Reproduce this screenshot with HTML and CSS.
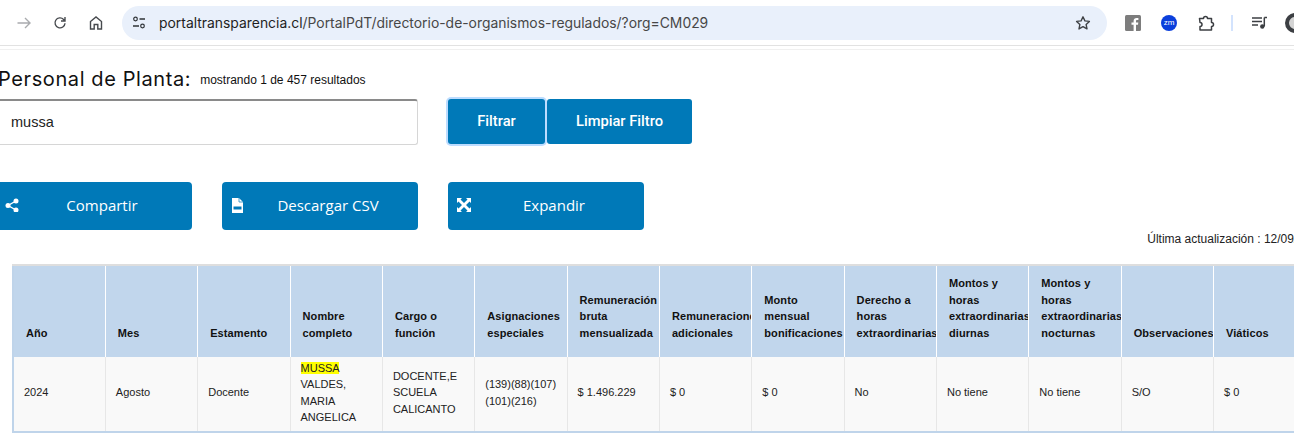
FILE: index.html
```html
<!DOCTYPE html>
<html lang="es">
<head>
<meta charset="utf-8">
<title>Personal de Planta</title>
<link rel="stylesheet" href="styles.css">
</head>
<body>
<header class="toolbar">
  <div class="nav">
    <svg class="ic" width="16" height="16" viewBox="0 0 16 16"><path d="M1.5 8H14M9 3l5 5-5 5" fill="none" stroke="#a9abae" stroke-width="1.4"/></svg>
    <svg class="ic" width="16" height="16" viewBox="0 0 16 16"><path d="M13 8.2A5 5 0 1 1 11.6 4.4L13 5.8M13 2v4H9" fill="none" stroke="#474a4e" stroke-width="1.4"/></svg>
    <svg class="ic" width="16" height="16" viewBox="0 0 16 16"><path d="M2.500 14V6.500L8 2l5.500 4.500V14H9.800V9.500H6.200V14Z" fill="none" stroke="#474a4e" stroke-width="1.4"/></svg>
  </div>
  <div class="omnibox">
    <svg class="tune" width="16" height="16" viewBox="0 0 16 16"><circle cx="4.500" cy="4" r="1.800" fill="none" stroke="#2f3337" stroke-width="1.200"/><path d="M8.500 4H14M2 11h6" stroke="#2f3337" stroke-width="1.300"/><circle cx="11.500" cy="11" r="1.800" fill="none" stroke="#2f3337" stroke-width="1.200"/></svg>
    <span class="url">portaltransparencia.cl<span class="path">/PortalPdT/directorio-de-organismos-regulados/?org=CM029</span></span>
    <svg class="star" width="16" height="16" viewBox="0 0 16 16"><path d="M8 1.800l1.900 4.100 4.500.5-3.300 3 .9 4.500L8 11.600l-4 2.300.9-4.500-3.300-3 4.500-.5Z" fill="none" stroke="#3f4246" stroke-width="1.400" stroke-linejoin="round"/></svg>
  </div>
  <div class="exts">
    <svg width="16" height="16" viewBox="0 0 16 16"><rect width="16" height="16" rx="1.500" fill="#7d7d7d"/><path d="M11 16V9.800h2l.3-2.300H11V6.100c0-.7.300-1.100 1.100-1.100h1.300V3a9 9 0 0 0-1.800-.1C9.800 2.900 8.600 4 8.600 5.900v1.600H6.500v2.300h2.100V16Z" fill="#fff"/></svg>
    <span class="zm">zm</span>
    <svg width="18" height="18" viewBox="0 0 18 18"><path d="M2.500 4.500H6.500a2 2 0 0 1 4 0h4v4a2 2 0 0 1 0 4v3.500H3V12.500a2 2 0 0 0 0-4Z" fill="none" stroke="#3c3f43" stroke-width="1.500" stroke-linejoin="round"/></svg>
    <span class="sep"></span>
    <svg width="16" height="16" viewBox="0 0 16 16"><path d="M0 3h10M0 6.500h10M0 10h6" stroke="#3c3f43" stroke-width="1.400"/><path d="M12.300 2.500v9" stroke="#3c3f43" stroke-width="1.500"/><path d="M12.300 2.500H15" stroke="#3c3f43" stroke-width="1.500"/><circle cx="10.300" cy="11.500" r="2.200" fill="#3c3f43"/></svg>
    <span class="avatar"></span>
  </div>
</header>
<main class="page">
  <h1 class="title">Personal de Planta: <small class="count">mostrando 1 de 457 resultados</small></h1>
  <form class="filter">
    <input class="search" type="text" value="mussa">
    <button class="btn btn-filter" type="button">Filtrar</button>
    <button class="btn btn-clear" type="button">Limpiar Filtro</button>
  </form>
  <div class="actions">
    <a class="action"><svg class="a-ic" width="14" height="14" viewBox="0 0 14 14"><circle cx="11" cy="3" r="2.500" fill="#fff"/><circle cx="3" cy="7.500" r="2.500" fill="#fff"/><circle cx="11" cy="12" r="2.500" fill="#fff"/><path d="M11 3 3 7.500 11 12" stroke="#fff" stroke-width="1.400" fill="none"/></svg>Compartir</a>
    <a class="action"><svg class="a-ic a-csv" width="11" height="15" viewBox="0 0 11 15"><path d="M0 0h7l4 4v11H0Z" fill="#fff"/><path d="M7 0v4h4" fill="none" stroke="#0079b8" stroke-width=".7"/><path d="M1.500 8.500h8v3h-8Z" fill="#0079b8"/></svg>Descargar CSV</a>
    <a class="action"><svg class="a-ic" width="14" height="14" viewBox="0 0 14 14"><path d="M0 0h5L3.500 1.500 7 5l3.500-3.500L9 0h5v5l-1.500-1.500L9 7l3.500 3.500L14 9v5H9l1.500-1.500L7 9l-3.500 3.500L5 14H0V9l1.500 1.500L5 7 1.500 3.500 0 5Z" fill="#fff"/></svg>Expandir</a>
  </div>
  <p class="updated">Última actualización : 12/09/2024</p>
  <div class="table-wrap">
    <table class="data">
      <thead>
        <tr>
          <th>Año</th><th>Mes</th><th>Estamento</th><th>Nombre completo</th><th>Cargo o función</th><th>Asignaciones especiales</th><th>Remuneración bruta mensualizada</th><th>Remuneraciones adicionales</th><th>Monto mensual bonificaciones</th><th>Derecho a horas extraordinarias</th><th>Montos y horas extraordinarias diurnas</th><th>Montos y horas extraordinarias nocturnas</th><th>Observaciones</th><th>Viáticos</th>
        </tr>
      </thead>
      <tbody>
        <tr>
          <td>2024</td><td>Agosto</td><td>Docente</td><td><mark class="hit">MUSSA</mark> VALDES, MARIA ANGELICA</td><td>DOCENTE,E<wbr>SCUELA CALICANTO</td><td>(139)(88)(107)(101)(216)</td><td>$ 1.496.229</td><td>$ 0</td><td>$ 0</td><td>No</td><td>No tiene</td><td>No tiene</td><td>S/O</td><td>$ 0</td>
        </tr>
      </tbody>
    </table>
  </div>
</main>
</body>
</html>
```
FILE: styles.css
```css
* { box-sizing: border-box; }
html, body { margin: 0; height: 434px; overflow: hidden; background: #fff; }
body { width: 1294px; font-family: "Liberation Sans", Arial, sans-serif; color: #000; }

.toolbar { display: flex; align-items: center; height: 50px; padding: 6px 0 10px 16px; border-bottom: 1px solid #f0f0f0; box-shadow: inset 0 -3px 0 #fff, inset 0 -4px 0 #e2e2e2; }
.nav { display: flex; gap: 20px; width: 106px; flex: none; }
.omnibox { display: flex; align-items: center; width: 985px; height: 34px; flex: none; background: #e9f0fb; border-radius: 17px; padding: 0 16px 0 9px; }
.tune { flex: none; margin-right: 12px; }
.url { flex: 1; font: 13.9px/20px Inter, "Liberation Sans", sans-serif; color: #1f1f1f; white-space: nowrap; }
.path { color: #474747; }
.exts { display: flex; align-items: center; margin-left: 18px; gap: 20px; flex: none; }
.zm { display: block; width: 16px; height: 16px; border-radius: 50%; background: #0b3fdc; color: #fff; font: 8px/16px "Liberation Sans", sans-serif; text-align: center; }
.sep { display: block; width: 2px; height: 16px; background: #d3e3fd; margin: 0 -1px 0 -4px; }
.avatar { display: block; width: 20px; height: 20px; border-radius: 50%; border: 4px solid #3c3f43; background: #d4d4d4; margin-left: -3px; flex: none; }

.page { margin-left: -4px; }
.title { display: flex; align-items: center; gap: 9px; margin: 0; padding: 9px 0 0 2px; font: 400 20px/24px Inter, sans-serif; letter-spacing: .6px; color: #111; height: 49px; white-space: nowrap; }
.count { margin-top: 2px; font: 12px/16px "Liberation Sans", sans-serif; letter-spacing: 0; color: #111; }

.filter { display: flex; align-items: flex-start; height: 83px; }
.search { width: 422px; height: 46px; padding: 0 0 2px 14px; border: 1px solid #d6d6d6; border-top: 2px solid #8a8a8a; border-left-color: #a9a9a9; border-radius: 3px; font: 14.5px "Liberation Sans", sans-serif; color: #222; margin-right: 30px; background: #fff; outline: none; }
.btn { height: 45px; padding: 0 0 2px; background: #0079b8; color: #fff; border: 0; border-radius: 3px; font: 500 14.7px Roboto, sans-serif; }
.btn-filter { width: 97px; margin-right: 2px; box-shadow: 0 0 0 2px #bcdcff; }
.btn-clear { width: 145px; }

.actions { display: flex; gap: 30px; }
.action { position: relative; display: flex; align-items: center; justify-content: center; width: 196px; height: 48px; padding: 0 0 2px 16px; background: #0079b8; color: #fff; border-radius: 4px; font: 400 15px/20px "Open Sans", sans-serif; }
.a-ic { position: absolute; left: 9px; top: 16px; }
.a-csv { left: 10px; }

.updated { margin: 0; height: 34px; padding-top: 1px; font: 12px/16px "Liberation Sans", sans-serif; color: #222; white-space: nowrap; width: 1328px; text-align: right; }

.table-wrap { margin-left: 16px; width: 1282px; overflow: hidden; }
.data { table-layout: fixed; width: 1294px; border-collapse: collapse; border-top: 2px solid #dedede; border-left: 2px solid #bfd4ea; border-bottom: 2px solid #bfd4ea; }
.data th { background: #c1d6ec; height: 92px; padding: 0 0 16px 12px; vertical-align: bottom; text-align: left; font: 700 11px/16.500px "Liberation Sans", sans-serif; letter-spacing: .1px; color: #111; border-left: 1px solid #fff; overflow: hidden; }
.data th:first-child { border-left: 0; }
.data td { background: #f9f9f9; height: 75px; padding: 0 10px 3px 10px; vertical-align: middle; font: 11px/16.500px "Liberation Sans", sans-serif; color: #222; border-left: 1px solid #e7e7e7; overflow-wrap: break-word; }
.data td:first-child { border-left: 0; }
.hit { background: #ff0; color: #222; }
```
